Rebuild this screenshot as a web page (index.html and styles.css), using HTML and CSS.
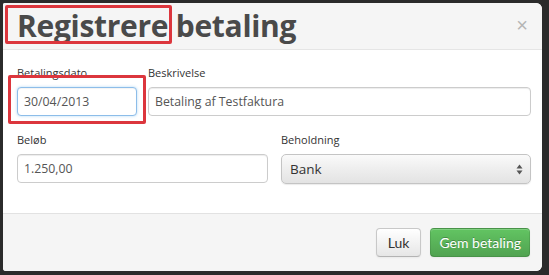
FILE: index.html
```html
<!DOCTYPE html>
<html lang="da">
<head>
    <meta charset="UTF-8">
    <meta name="viewport" content="width=device-width, initial-scale=1.0">
    <title>Registrere betaling</title>
    <link rel="stylesheet" href="styles.css">
</head>
<body>

    <div class="modal">
        <div class="modal-header">
            <h3 class="modal-title">Registrere betaling</h3>
            <span class="mark mark-title"></span>
            <button class="close">&times;</button>
        </div>

        <div class="modal-body">
            <div class="row row-first">
                <div class="field">
                    <label>Betalingsdato</label>
                    <input type="text" class="input focused" value="30/04/2013">
                </div>
                <div class="field">
                    <label>Beskrivelse</label>
                    <input type="text" class="input" value="Betaling af Testfaktura">
                </div>
                <span class="mark mark-date"></span>
            </div>

            <div class="row row-second">
                <div class="field">
                    <label>Beløb</label>
                    <input type="text" class="input" value="1.250,00">
                </div>
                <div class="field">
                    <label>Beholdning</label>
                    <div class="select">
                        <span>Bank</span>
                        <svg class="select-arrows" width="7" height="11" viewBox="0 0 7 11">
                            <path d="M3.5 0.5 L6.5 4.5 L0.5 4.5 Z" fill="#555"/>
                            <path d="M3.5 10.5 L6.5 6.5 L0.5 6.5 Z" fill="#555"/>
                        </svg>
                    </div>
                </div>
            </div>
        </div>

        <div class="modal-footer">
            <button class="btn">Luk</button>
            <button class="btn btn-success">Gem betaling</button>
        </div>
    </div>

</body>
</html>
```

FILE: styles.css
```css
/* General Styles */
body {
    margin: 0;
    padding: 3px 7px 4px 3px;
    background-color: #2b2b2b;
    font-family: 'Open Sans', 'Liberation Sans', sans-serif;
    color: #333;
    box-sizing: border-box;
    height: 275px;
}

/* Modal */
.modal {
    background-color: #fff;
    border-radius: 2px 6px 6px 3px;
    overflow: hidden;
    height: 268px;
    display: flex;
    flex-direction: column;
}

.modal-header {
    position: relative;
    height: 47px;
    background-color: #f5f5f5;
    border-bottom: 1px solid #e5e5e5;
    padding-left: 14px;
    box-sizing: border-box;
}

.modal-title {
    margin: 0;
    font-size: 30px;
    line-height: 45px;
    font-weight: 700;
    color: #4a4a4a;
    letter-spacing: -0.3px;
}

.close {
    position: absolute;
    right: 14px;
    top: 10px;
    border: none;
    background: none;
    padding: 0;
    font-family: 'Liberation Sans', sans-serif;
    font-size: 20px;
    line-height: 24px;
    color: #b5b5b5;
}

/* Red annotation boxes */
.mark {
    position: absolute;
    border: 3px solid #dc363d;
    border-radius: 2px;
    pointer-events: none;
}

.mark-title {
    left: 2px;
    top: 2px;
    width: 161px;
    height: 33px;
}

.mark-date {
    left: -9px;
    top: 11px;
    width: 132px;
    height: 43px;
}

/* Body */
.modal-body {
    flex: 1;
    padding: 14px 11px 0 14px;
}

.row {
    position: relative;
    display: grid;
}

.row-first {
    grid-template-columns: 120px 1fr;
    column-gap: 11px;
    margin-bottom: 15px;
}

.row-second {
    grid-template-columns: 251px 1fr;
    column-gap: 13px;
}

.field {
    display: flex;
    flex-direction: column;
}

label {
    font-size: 11px;
    line-height: 17px;
    color: #333;
    margin-bottom: 6px;
}

.input {
    height: 29px;
    box-sizing: border-box;
    border: 1px solid #ccc;
    border-radius: 4px;
    padding: 0 6px;
    font-family: 'Open Sans', sans-serif;
    font-size: 12.3px;
    color: #555;
    box-shadow: inset 0 1px 1px rgba(0, 0, 0, 0.075);
    outline: none;
}

.input.focused {
    border-color: #8dbde9;
    box-shadow: inset 0 1px 1px rgba(0, 0, 0, 0.05), 0 0 3px rgba(82, 168, 236, 0.45);
}

.select {
    height: 30px;
    box-sizing: border-box;
    border: 1px solid #c4c4c4;
    border-radius: 5px;
    background: linear-gradient(#fafafa, #eeeeee 50%, #e3e3e3);
    box-shadow: 0 1px 1px rgba(0, 0, 0, 0.08);
    display: flex;
    align-items: center;
    justify-content: space-between;
    padding: 0 7px 0 8px;
    font-size: 13.5px;
    color: #333;
}

/* Footer */
.modal-footer {
    height: 58px;
    box-sizing: border-box;
    background-color: #f5f5f5;
    border-top: 1px solid #e2e2e2;
    display: flex;
    justify-content: flex-end;
    align-items: flex-start;
    gap: 9px;
    padding: 14px 12px 0 0;
}

.btn {
    height: 29px;
    box-sizing: border-box;
    font-family: 'Lato', sans-serif;
    font-size: 14px;
    color: #333;
    padding: 0 11px;
    border: 1px solid #c8c8c8;
    border-bottom-color: #b3b3b3;
    border-radius: 4px;
    background: linear-gradient(#ffffff, #e6e6e6);
    box-shadow: inset 0 1px 0 rgba(255, 255, 255, 0.2), 0 1px 2px rgba(0, 0, 0, 0.05);
}

.btn-success {
    color: #fff;
    padding: 0 8px;
    border-color: rgba(0, 0, 0, 0.1) rgba(0, 0, 0, 0.1) rgba(0, 0, 0, 0.25);
    background: linear-gradient(#62c462, #51a351);
    text-shadow: 0 -1px 0 rgba(0, 0, 0, 0.25);
}
```
